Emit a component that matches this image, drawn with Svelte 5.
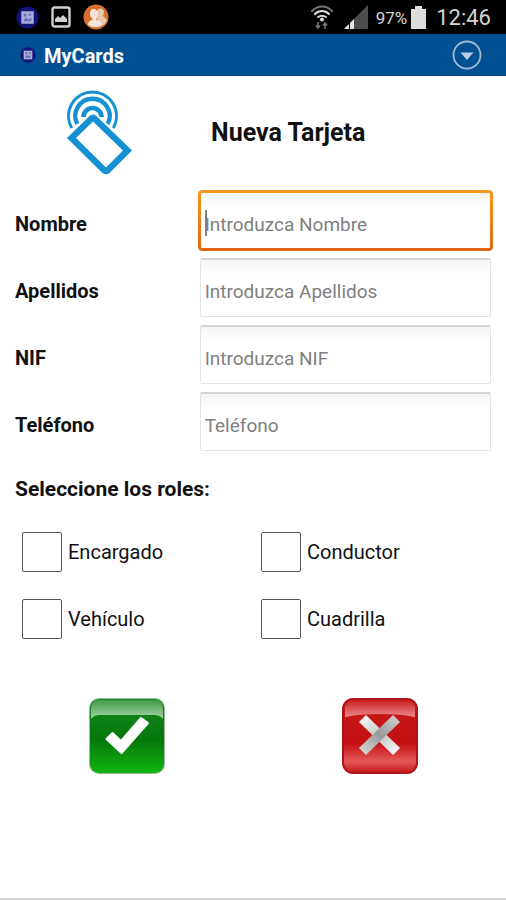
<script lang="ts">
  interface Field {
    id: string;
    label: string;
    placeholder: string;
    type: string;
  }

  const fields: Field[] = [
    { id: 'nombre', label: 'Nombre', placeholder: 'Introduzca Nombre', type: 'text' },
    { id: 'apellidos', label: 'Apellidos', placeholder: 'Introduzca Apellidos', type: 'text' },
    { id: 'nif', label: 'NIF', placeholder: 'Introduzca NIF', type: 'text' },
    { id: 'telefono', label: 'Teléfono', placeholder: 'Teléfono', type: 'tel' },
  ];
  const roles = ['Encargado', 'Conductor', 'Vehículo', 'Cuadrilla'];

  let values: Record<string, string> = $state({ nombre: '', apellidos: '', nif: '', telefono: '' });
  let selected: string[] = $state([]);
  let active = $state('nombre');

  function reset(): void {
    for (const f of fields) values[f.id] = '';
    selected = [];
    active = 'nombre';
  }
</script>

{#snippet appIcon(size: number)}
  <svg width={size} height={size} viewBox="0 0 24 24" aria-hidden="true">
    <circle cx="12" cy="12" r="11.5" fill="#101478" />
    <rect x="5.500" y="5.500" width="13" height="13" fill="#a9afd9" />
    <path d="M8 8h3v3H8zM13 8h3v2h-3zM8 14l3-2 2 2 3-2v4H8z" fill="#6a71b6" />
  </svg>
{/snippet}

<div class="screen">
  <div class="status">
    <div class="notices">
      {@render appIcon(23)}
      <svg width="20" height="22" viewBox="0 0 20 22" aria-hidden="true">
        <rect x="1.5" y="1.5" width="17" height="19" rx="2" fill="none" stroke="#d0d0d0" stroke-width="2.4" />
        <path d="M4 16v-3l3-3 2 2 3-3 4 4v3z" fill="#d0d0d0" />
      </svg>
      <svg width="26" height="26" viewBox="0 0 26 26" aria-hidden="true">
        <circle cx="13" cy="13" r="12.5" fill="#d8702c" />
        <path d="M14 7c1-4 7-3 7 1 0 2-1 3-1 4l4 4c-1 3-3 5-5 6l-5-7z" fill="#e9c8b2" />
        <path d="M10 5c3 0 5 2 5 5 0 2-1 4-2 5l1 1c3 1 5 2 5 5-3 3-9 3-14 0 0-3 1-4 4-5l1-1c-2-1-3-3-3-5 0-3 1-5 3-5z" fill="#f4e4da" />
      </svg>
    </div>
    <div class="system">
      <svg class="wifi" width="24" height="26" viewBox="0 0 24 26" aria-hidden="true">
        <g fill="none" stroke-linecap="round">
          <path d="M2 7c6-6 14-6 20 0" stroke="#777" stroke-width="2" />
          <path d="M5 10c4-4 10-4 14 0" stroke="#ddd" stroke-width="2" />
          <path d="M8 13c3-2 5-2 8 0" stroke="#ddd" stroke-width="2" />
        </g>
        <circle cx="12" cy="15.500" r="2" fill="#ddd" />
        <path d="M8 18v6M6 21.500l2 2.500 2-2.500M15 25v-6M13 21.500l2-2.500 2 2.500" fill="none" stroke="#777" stroke-width="1.600" />
      </svg>
      <svg width="24" height="24" viewBox="0 0 24 24" aria-hidden="true">
        <path d="M24 0v24H0z" fill="#4c4c4c" />
        <path d="M10 14v10H0z" fill="#e4e4e4" />
        <path d="M5.500 17v7" stroke="#000" stroke-width="1" />
      </svg>
      <span class="percent">97%</span>
      <svg class="battery" width="15" height="23" viewBox="0 0 15 23" aria-hidden="true">
        <path d="M4 0h7v3h4v20H0V3h4z" fill="#dcdcdc" />
      </svg>
      <time>12:46</time>
    </div>
  </div>

  <header>
    {@render appIcon(16)}
    <span class="app-name">MyCards</span>
    <button class="menu" type="button" aria-label="Menú">
      <svg width="30" height="30" viewBox="0 0 30 30" aria-hidden="true">
        <circle cx="15" cy="15" r="13.500" fill="none" stroke="#a3b9d6" stroke-width="1.800" />
        <path d="M8.500 12.500h13L15 20z" fill="#b7cbe3" />
      </svg>
    </button>
  </header>

  <form onsubmit={(e) => e.preventDefault()}>
    <div class="title">
      <svg width="68" height="86" viewBox="0 0 68 86" aria-hidden="true">
        <g fill="none" stroke="#1590d2">
          <path d="M6.700 38A24 24 0 1 1 48.300 38" stroke-width="3" />
          <path d="M12.300 34A17.200 17.200 0 1 1 42.700 34" stroke-width="4.400" />
          <path d="M18.500 27A9 9 0 0 1 36.500 27" stroke-width="4.600" />
        </g>
        <path d="M6.500 48L28 27.500 62.500 60.500 41 81z" fill="#fff" stroke="#fff" stroke-width="10" />
        <path d="M6.500 48L26.500 28.500Q28 27.200 29.500 28.500L62.500 60.500 42.500 80.500Q41 81.500 39.500 80.500z" fill="#fff" stroke="#1590d2" stroke-width="6.400" />
      </svg>
      <h1>Nueva Tarjeta</h1>
    </div>

    <div class="fields">
      {#each fields as f (f.id)}
        <div class="field">
          <label for={f.id}>{f.label}</label>
          <div class="box" class:active={active === f.id}>
            <input
              id={f.id}
              type={f.type}
              placeholder={f.placeholder}
              bind:value={values[f.id]}
              onfocus={() => (active = f.id)}
            />
            {#if active === f.id && !values[f.id]}<span class="caret"></span>{/if}
          </div>
        </div>
      {/each}
    </div>

    <fieldset>
      <legend>Seleccione los roles:</legend>
      <div class="roles">
        {#each roles as role (role)}
          <label>
            <input type="checkbox" value={role} bind:group={selected} />
            {role}
          </label>
        {/each}
      </div>
    </fieldset>

    <div class="actions">
      <button type="submit" aria-label="Aceptar">
        <svg width="78" height="78" viewBox="0 0 78 78" aria-hidden="true">
          <defs>
            <linearGradient id="green" x1="0" y1="0" x2="0" y2="1">
              <stop offset="0" stop-color="#16851f" />
              <stop offset="0.550" stop-color="#04780a" />
              <stop offset="1" stop-color="#12b512" />
            </linearGradient>
            <linearGradient id="green-shine" x1="0" y1="0" x2="0" y2="1">
              <stop offset="0" stop-color="#3f9c48" />
              <stop offset="1" stop-color="#a5d6a6" />
            </linearGradient>
          </defs>
          <rect x="1" y="1" width="76" height="76" rx="10" fill="#9bb89b" />
          <rect x="2" y="2" width="74" height="74" rx="9" fill="url(#green)" />
          <path d="M3 22V12q0-9 9-9h54q9 0 9 9v10q-3-4-9-4H12q-6 0-9 4z" fill="url(#green-shine)" />
          <path d="M18.500 42l6-6 8.500 8 20-23 7 5-26.500 30z" fill="#fff" stroke="#fff" stroke-width="2" stroke-linejoin="round" />
        </svg>
      </button>
      <button type="button" aria-label="Cancelar" onclick={reset}>
        <svg width="78" height="78" viewBox="0 0 78 78" aria-hidden="true">
          <defs>
            <linearGradient id="red" x1="0" y1="0" x2="0" y2="1">
              <stop offset="0" stop-color="#c8181a" />
              <stop offset="0.600" stop-color="#c41012" />
              <stop offset="0.850" stop-color="#e4585a" />
              <stop offset="1" stop-color="#c61a1c" />
            </linearGradient>
            <linearGradient id="red-shine" x1="0" y1="0" x2="0" y2="1">
              <stop offset="0" stop-color="#cb2428" />
              <stop offset="1" stop-color="#e98a8a" />
            </linearGradient>
            <linearGradient id="bar" x1="0" y1="0" x2="1" y2="1">
              <stop offset="0" stop-color="#fff" />
              <stop offset="0.500" stop-color="#c4c4c4" />
              <stop offset="1" stop-color="#fff" />
            </linearGradient>
            <linearGradient id="bar-dark" x1="0" y1="1" x2="1" y2="0">
              <stop offset="0" stop-color="#dedede" />
              <stop offset="0.500" stop-color="#999" />
              <stop offset="1" stop-color="#d4d4d4" />
            </linearGradient>
          </defs>
          <rect x="1" y="1" width="76" height="76" rx="11" fill="#b01618" />
          <rect x="3" y="3" width="72" height="72" rx="9" fill="url(#red)" />
          <path d="M4 20v-8q0-8 8-8h54q8 0 8 8v8q-14-3-35-3T4 20z" fill="url(#red-shine)" />
          <path d="M18 25l7-7 34 33-7 7z" fill="url(#bar)" />
          <path d="M52 18l7 7-34 33-7-7z" fill="url(#bar-dark)" />
        </svg>
      </button>
    </div>
  </form>
</div>

<style>
  :global(body) {
    margin: 0;
    background: #fff;
  }
  .screen {
    box-sizing: border-box;
    min-height: 100vh;
    display: flex;
    flex-direction: column;
    border-bottom: 2px solid #d6d6d6;
    background: #fff;
    color: #111;
    font-family: Roboto, 'Liberation Sans', sans-serif;
    font-size: 20px;
    line-height: 24px;
  }
  button {
    padding: 0;
    border: 0;
    background: none;
    cursor: pointer;
  }
  svg {
    display: block;
    flex: none;
  }

  .status {
    height: 34px;
    padding: 0 15px 0 16px;
    display: flex;
    align-items: center;
    justify-content: space-between;
    background: #000;
    color: #d4d4d4;
  }
  .notices {
    display: flex;
    align-items: center;
    gap: 12px;
  }
  .system {
    display: flex;
    align-items: center;
    gap: 8px;
  }
  .wifi {
    margin-right: 2px;
  }
  .percent {
    padding-top: 2px;
    font-size: 17px;
  }
  .battery {
    margin-left: -4px;
  }
  time {
    margin-left: 2px;
    padding-top: 2px;
    font-size: 22px;
  }

  header {
    box-sizing: border-box;
    height: 42px;
    padding: 0 24px 0 20px;
    display: flex;
    align-items: center;
    gap: 8px;
    border-bottom: 1px solid #10388c;
    background: #005092;
    color: #fff;
  }
  .app-name {
    flex: 1;
    padding-top: 2px;
    font-weight: 700;
  }

  .title {
    padding: 14px 0 15px 65px;
    display: flex;
    align-items: center;
    gap: 78px;
  }
  h1 {
    margin: 0;
    font-size: 25px;
    font-weight: 700;
  }

  .fields {
    padding: 0 15px;
    display: flex;
    flex-direction: column;
    gap: 8px;
  }
  .field {
    display: grid;
    grid-template-columns: 39fr 61fr;
  }
  .field label {
    padding-top: 6px;
    align-self: center;
    font-weight: 700;
  }
  .box {
    position: relative;
    margin-left: -1px;
  }
  .box input {
    box-sizing: border-box;
    width: 100%;
    height: 59px;
    padding: 6px 4px 0;
    border: 1px solid #e4e4e4;
    border-top: 2px solid #d4d4d4;
    border-radius: 2px;
    outline: none;
    background: linear-gradient(#f4f4f4, #fff 14px);
    color: #111;
    font: inherit;
    font-size: 19px;
  }
  .box input::placeholder {
    color: #808080;
    opacity: 1;
  }
  .active::before {
    content: '';
    position: absolute;
    inset: -1px -2px;
    padding: 3px;
    border-radius: 4px;
    background: linear-gradient(#f59a1c, #e3650f);
    mask: linear-gradient(#000 0 0) content-box exclude, linear-gradient(#000 0 0);
    pointer-events: none;
  }
  .caret {
    position: absolute;
    left: 5px;
    top: 19px;
    width: 2px;
    height: 26px;
    background: #808080;
  }

  fieldset {
    min-width: 0;
    margin: 0;
    padding: 0;
    border: 0;
  }
  legend {
    padding: 26px 15px 0;
    font-size: 21px;
    font-weight: 700;
  }
  .roles {
    padding: 31px 6px 0 22px;
    display: grid;
    grid-template-columns: 1fr 1fr;
    row-gap: 27px;
  }
  .roles label {
    display: flex;
    align-items: center;
    gap: 6px;
  }
  .roles input {
    box-sizing: border-box;
    appearance: none;
    width: 40px;
    height: 40px;
    margin: 0;
    border: 1px solid #555;
    border-radius: 2px;
    background: #fff;
  }
  .roles input:checked {
    background: #005092;
    box-shadow: inset 0 0 0 6px #fff;
  }

  .actions {
    padding: 58px 0 24px;
    display: grid;
    grid-template-columns: 1fr 1fr;
    justify-items: center;
  }
</style>
